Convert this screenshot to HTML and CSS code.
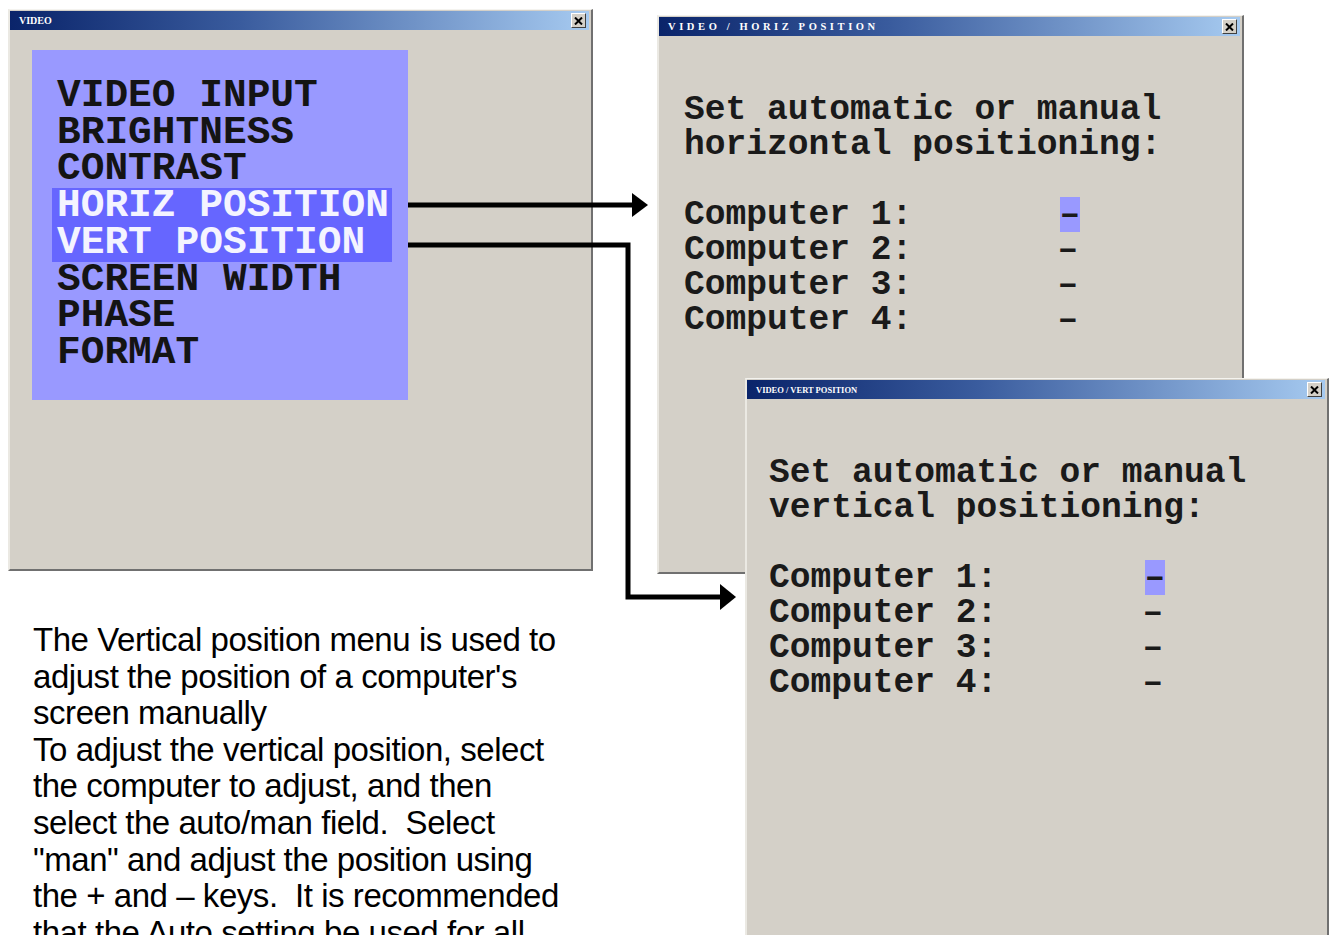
FILE: index.html
```html
<!DOCTYPE html>
<html lang="en">
<head>
    <meta charset="UTF-8">
    <title>Video / Vert Position</title>
    <link rel="stylesheet" href="styles.css">
</head>
<body>
    <div class="desktop">
        <div class="left-col">
            <div class="window win-video">
                <div class="titlebar">
                    <span class="title">VIDEO</span>
                    <span class="close"><svg width="9" height="8" viewBox="0 0 9 8"><path d="M1 0.5L8 7.5M8 0.5L1 7.5" stroke="#000" stroke-width="2"/></svg></span>
                </div>
                <div class="osd">
                    <div class="item">VIDEO INPUT</div>
                    <div class="item">BRIGHTNESS</div>
                    <div class="item">CONTRAST</div>
                    <div class="selected">
                        <div class="item">HORIZ POSITION</div>
                        <div class="item">VERT POSITION</div>
                    </div>
                    <div class="item">SCREEN WIDTH</div>
                    <div class="item">PHASE</div>
                    <div class="item">FORMAT</div>
                </div>
            </div>

            <p class="note">
                The Vertical position menu is used to<br>
                adjust the position of a computer's<br>
                screen manually<br>
                To adjust the vertical position, select<br>
                the computer to adjust, and then<br>
                select the auto/man field.&nbsp; Select<br>
                "man" and adjust the position using<br>
                the + and &ndash; keys.&nbsp; It is recommended<br>
                that the Auto setting be used for all
            </p>
        </div>

        <!-- sub menu windows sit on the desktop where they were opened -->
        <div class="window win-horiz">
            <div class="titlebar">
                <span class="title">VIDEO / HORIZ POSITION</span>
                <span class="close"><svg width="9" height="8" viewBox="0 0 9 8"><path d="M1 0.5L8 7.5M8 0.5L1 7.5" stroke="#000" stroke-width="2"/></svg></span>
            </div>
            <div class="screen">
                <div class="row">Set automatic or manual</div>
                <div class="row">horizontal positioning:</div>
                <div class="row">&nbsp;</div>
                <div class="row">Computer 1:       <span class="cur">&ndash;</span></div>
                <div class="row">Computer 2:       &ndash;</div>
                <div class="row">Computer 3:       &ndash;</div>
                <div class="row">Computer 4:       &ndash;</div>
            </div>
        </div>

        <div class="window win-vert">
            <div class="titlebar">
                <span class="title">VIDEO / VERT POSITION</span>
                <span class="close"><svg width="9" height="8" viewBox="0 0 9 8"><path d="M1 0.5L8 7.5M8 0.5L1 7.5" stroke="#000" stroke-width="2"/></svg></span>
            </div>
            <div class="screen">
                <div class="row">Set automatic or manual</div>
                <div class="row">vertical positioning:</div>
                <div class="row">&nbsp;</div>
                <div class="row">Computer 1:       <span class="cur">&ndash;</span></div>
                <div class="row">Computer 2:       &ndash;</div>
                <div class="row">Computer 3:       &ndash;</div>
                <div class="row">Computer 4:       &ndash;</div>
            </div>
        </div>

        <svg class="arrows" width="1330" height="935" viewBox="0 0 1330 935">
            <path d="M408 205H634" fill="none" stroke="#000" stroke-width="5"/>
            <polygon points="632,193 648,205 632,217" fill="#000"/>
            <path d="M408 245H628V597H722" fill="none" stroke="#000" stroke-width="5"/>
            <polygon points="720,584 736,597 720,610" fill="#000"/>
        </svg>
    </div>
</body>
</html>
```

FILE: styles.css
```css
*{
    margin: 0;
    padding: 0;
    box-sizing: border-box;
}
body{
    background: #fff;
    overflow: hidden;
}
.desktop{
    position: relative;
    width: 1330px;
    height: 935px;
    overflow: hidden;
}
.left-col{
    display: flex;
    flex-direction: column;
    padding: 9px 0 0 8px;
}

/* window chrome */
.window{
    background: #d4d0c8;
    border-style: solid;
    border-width: 1px 2px 2px 2px;
    border-color: #f4f3ef #707070 #707070 #ebe9e3;
    padding: 1px 2px 0 0;
}
.win-video{
    width: 585px;
    height: 562px;
}
.win-horiz{
    position: absolute;
    left: 657px;
    top: 15px;
    width: 587px;
    height: 559px;
}
.win-vert{
    position: absolute;
    left: 745px;
    top: 378px;
    width: 584px;
    height: 600px;
}
.titlebar{
    height: 19px;
    display: flex;
    align-items: center;
    justify-content: space-between;
    padding: 0 3px 0 9px;
    background: linear-gradient(to right, #0a246a 0%, #3a5c9e 40%, #a6caf0 100%);
}
.title{
    font-family: "Liberation Serif", serif;
    font-weight: bold;
    font-size: 10px;
    color: #fff;
    white-space: pre;
}
.win-horiz .title{
    font-size: 10.5px;
    letter-spacing: 3.6px;
}
.win-vert .title{
    font-size: 8.5px;
}
.close{
    width: 15px;
    height: 15px;
    display: flex;
    align-items: center;
    justify-content: center;
    background: #d4d0c8;
    border: 1px solid;
    border-color: #fff #404040 #404040 #fff;
}

/* OSD main menu */
.osd{
    width: 376px;
    height: 350px;
    margin: 20px 0 0 22px;
    padding: 28px 0 0 20px;
    background: #9999ff;
    font-family: "Liberation Mono", monospace;
    font-weight: bold;
    font-size: 39.5px;
    line-height: 36.7px;
    color: #141414;
}
.osd .item{
    padding-left: 5px;
    white-space: pre;
}
.osd .selected{
    width: 340px;
    background: #6666ff;
    color: #f4f4ff;
}

/* sub menu screens */
.screen{
    padding: 56px 0 0 25px;
    font-family: "Liberation Mono", monospace;
    font-weight: bold;
    font-size: 34.6px;
    line-height: 35px;
    color: #1a1a1a;
}
.screen .row{
    height: 35px;
    white-space: pre;
}
.win-vert .screen{
    padding-left: 22px;
}
.cur{
    display: inline-block;
    vertical-align: top;
    height: 35px;
    margin-left: 2px;
    background: #9999ff;
}

.note{
    margin: 51px 0 0 25px;
    font-family: "Liberation Sans", Arial, sans-serif;
    font-size: 33px;
    letter-spacing: -0.45px;
    line-height: 36.6px;
    color: #000;
    white-space: nowrap;
}

.arrows{
    position: absolute;
    left: 0;
    top: 0;
    pointer-events: none;
}
```
